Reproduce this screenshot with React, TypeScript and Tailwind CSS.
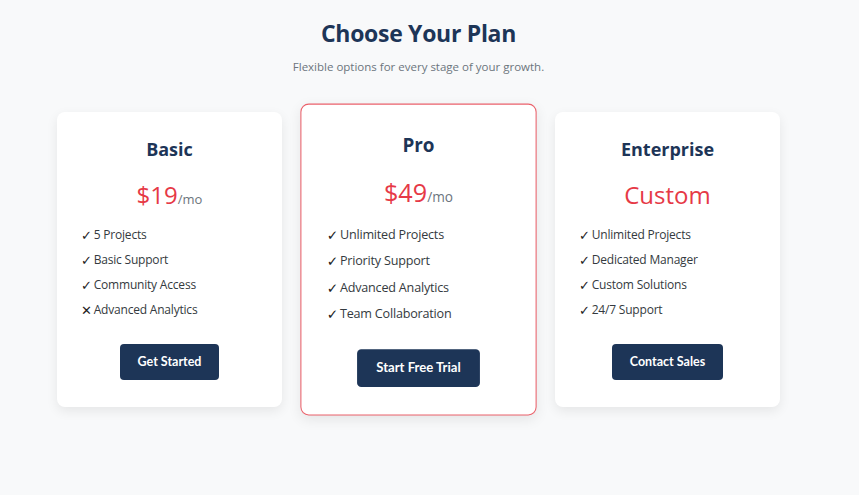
import React from "react";

type Plan = {
  name: string;
  price: string;
  per?: string;
  features: { text: string; ok: boolean }[];
  cta: string;
  featured?: boolean;
};

const plans: Plan[] = [
  {
    name: "Basic",
    price: "$19",
    per: "/mo",
    features: [
      { text: "5 Projects", ok: true },
      { text: "Basic Support", ok: true },
      { text: "Community Access", ok: true },
      { text: "Advanced Analytics", ok: false },
    ],
    cta: "Get Started",
  },
  {
    name: "Pro",
    price: "$49",
    per: "/mo",
    features: [
      { text: "Unlimited Projects", ok: true },
      { text: "Priority Support", ok: true },
      { text: "Advanced Analytics", ok: true },
      { text: "Team Collaboration", ok: true },
    ],
    cta: "Start Free Trial",
    featured: true,
  },
  {
    name: "Enterprise",
    price: "Custom",
    features: [
      { text: "Unlimited Projects", ok: true },
      { text: "Dedicated Manager", ok: true },
      { text: "Custom Solutions", ok: true },
      { text: "24/7 Support", ok: true },
    ],
    cta: "Contact Sales",
  },
];

const PlanCard = ({ plan }: { plan: Plan }) => (
  <div
    className={
      plan.featured
        ? "w-[225px] bg-white rounded-lg border border-[#e63946]/80 shadow-[0_4px_12px_rgba(0,0,0,0.08)] px-6 pt-[24px] pb-[26px] flex flex-col items-center scale-105"
        : "w-[225px] bg-white rounded-lg shadow-[0_4px_12px_rgba(0,0,0,0.08)] px-6 pt-[23px] pb-[27px] flex flex-col items-center"
    }
  >
    <h3 className="text-[18px] font-bold text-[#1d3557] leading-[28px]">{plan.name}</h3>
    <div className="mt-[16px] h-[32px] flex items-baseline text-[#e63946]">
      <span className="text-[24px] leading-[32px]">{plan.price}</span>
      {plan.per && <span className="text-[13px] text-[#6c757d]">{plan.per}</span>}
    </div>
    <ul className="self-stretch mt-[15px] flex flex-col gap-[7px] text-[12px] tracking-[-0.2px] text-[#343a40]">
      {plan.features.map((f) => (
        <li key={f.text} className="h-[18px] flex items-center gap-[2px]">
          <span className="font-['DejaVu_Sans',sans-serif] text-[13px] leading-none text-[#222]">{f.ok ? "✓" : "✕"}</span>
          <span>{f.text}</span>
        </li>
      ))}
    </ul>
    <button
      type="button"
      className="mt-[25px] h-[36px] px-[18px] rounded bg-[#1d3557] text-white text-[12.5px] font-bold font-['Lato',sans-serif]"
    >
      {plan.cta}
    </button>
  </div>
);

export default function App() {
  return (
    <div className="min-h-[495px] bg-[#f8f9fa] font-['Open_Sans','Noto_Sans',sans-serif] pr-[22px]">
      <div className="flex flex-col items-center pt-[17px]">
        <h1 className="text-[23px] font-bold text-[#1d3557] leading-[32px] tracking-[-0.3px]">Choose Your Plan</h1>
        <p className="mt-[9px] text-[11.5px] text-[#6c757d]">Flexible options for every stage of your growth.</p>
        <div className="mt-[36px] flex items-center gap-6">
          {plans.map((p) => (
            <PlanCard key={p.name} plan={p} />
          ))}
        </div>
      </div>
    </div>
  );
}
